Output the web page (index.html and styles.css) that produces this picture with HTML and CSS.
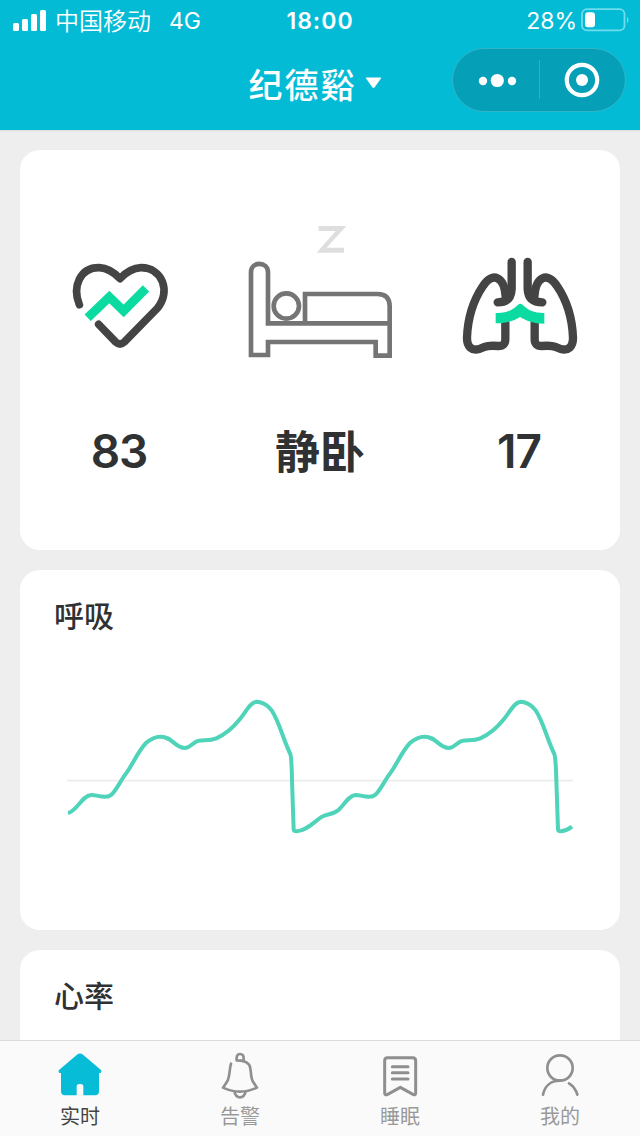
FILE: index.html
```html
<!DOCTYPE html>
<html lang="zh-CN">
<head>
    <meta charset="UTF-8">
    <meta name="viewport" content="width=device-width, initial-scale=1.0">
    <title>实时</title>
    <link rel="stylesheet" href="styles.css">
</head>
<body>
    <header class="header">
        <!-- 状态栏 -->
        <div class="status">
            <div class="status-left">
                <svg class="signal" viewBox="0 0 33 21" fill="#fff">
                    <rect x="0" y="13" width="6" height="8" rx="1.5"/>
                    <rect x="9" y="9" width="6" height="12" rx="1.5"/>
                    <rect x="18" y="4" width="6" height="17" rx="1.5"/>
                    <rect x="27" y="0" width="6" height="21" rx="1.5"/>
                </svg>
                <span class="carrier">中国移动</span>
                <span class="network">4G</span>
            </div>
            <div class="time">18:00</div>
            <div class="status-right">
                <span class="percent">28%</span>
                <svg class="battery" viewBox="0 0 48 24">
                    <rect x="1" y="1.2" width="42.5" height="21.2" rx="5" fill="none" stroke="#6fdcec" stroke-width="1.8"/>
                    <rect x="4" y="4.2" width="10" height="15" rx="3" fill="#fff"/>
                    <path d="M46 8.5 Q49 12 46 15.5 Z" fill="#6fdcec"/>
                </svg>
            </div>
        </div>
        <!-- 标题栏 -->
        <div class="nav">
            <div class="user">
                <span class="user-name">纪德谿</span>
                <svg class="arrow" viewBox="0 0 16 12"><path d="M1 .5H15Q16 .5 15.4 1.5L9.2 10.3Q8 11.8 6.8 10.3L.6 1.5Q0 .5 1 .5Z" fill="#fff"/></svg>
            </div>
            <div class="capsule">
                <svg viewBox="0 0 172 62">
                    <g fill="#fff">
                        <circle cx="30" cy="32" r="4.2"/>
                        <circle cx="44.3" cy="31.5" r="6.6"/>
                        <circle cx="59" cy="32" r="4.2"/>
                        <circle cx="129" cy="31" r="6"/>
                    </g>
                    <path d="M86.5 11V50" stroke="#31afc4" stroke-width="1"/>
                    <circle cx="129" cy="31" r="15.2" fill="none" stroke="#fff" stroke-width="4.2"/>
                </svg>
            </div>
        </div>
    </header>

    <main class="content">
        <!-- 当前状态 -->
        <section class="card summary">
            <div class="item">
                <div class="item-icon">
                    <svg class="heart" viewBox="0 0 360 330" fill="none">
                        <path d="M58 164C36 110 60 52 118 53C143 54 162 67 180 86C198 67 217 54 243 53C306 52 335 125 291 176L193 276Q180 288 167 276L116 223" stroke="#444" stroke-width="23" stroke-linecap="round" stroke-linejoin="round"/>
                        <path d="M83 203L148 141L191 183L258 115" stroke="#0bdba0" stroke-width="27"/>
                    </svg>
                </div>
                <span class="value number">83</span>
            </div>
            <div class="item">
                <div class="item-icon">
                    <svg class="bed" viewBox="0 0 480 450" fill="none">
                        <path d="M236 33H319L260 98H312V113H230L287 48H236Z" fill="#dedede"/>
                        <g stroke="#757575" stroke-width="14">
                            <path d="M33 420V172C33 138 84 138 84 172V325H449V422H407V381H84V420Z"/>
                            <path d="M195 325V237H413Q449 237 449 274V325"/>
                            <circle cx="139" cy="273" r="38"/>
                        </g>
                    </svg>
                </div>
                <span class="value">静卧</span>
            </div>
            <div class="item">
                <div class="item-icon">
                    <svg class="lungs" viewBox="0 0 390 330" fill="none">
                        <g stroke="#444" stroke-width="25" stroke-linecap="round" stroke-linejoin="round">
                            <path d="M170 36V117Q168 157 128 157"/>
                            <path d="M152 140C148 79 112 64 84 108C50 158 38 210 36 263C36 291 50 303 73 297C94 288 100 286 131 288Q151 288 151 268V218"/>
                            <path d="M218 36V117Q220 157 262 157"/>
                            <path d="M238 140C242 79 278 64 306 108C340 158 352 210 354 263C354 291 340 303 317 297C296 288 290 286 259 288Q239 288 239 268V218"/>
                        </g>
                        <path d="M122 189C157 190 171 180 186 167Q196 156 206 167C221 180 234 188 268 189V221C235 221 213 212 195 201C177 212 157 220 122 220Z" fill="#0bdba0"/>
                    </svg>
                </div>
                <span class="value number">17</span>
            </div>
        </section>

        <!-- 呼吸曲线 -->
        <section class="card breath">
            <h2>呼吸</h2>
            <svg class="chart" viewBox="0 0 1620 510" fill="none">
                <path d="M52 302H1568" stroke="#ececec" stroke-width="5"/>
                <path d="M54 399C80 394 97 345 125 345C142 345 163 356 180 347C195 340 207 308 232 275C250 249 266 211 288 189C300 179 313 170 330 170C365 168 375 204 404 204C422 204 430 184 446 182C465 179 478 184 499 175C528 162 550 142 570 117C588 95 601 66 620 65C638 66 654 76 665 91C688 125 700 180 721 222C725 235 725 260 726 300L731 448Q731 454 740 454C768 453 790 427 816 410C834 401 848 404 863 392C880 378 896 346 917 345C934 345 955 356 972 347C987 340 999 308 1024 275C1042 249 1058 211 1080 189C1092 179 1105 170 1122 170C1157 168 1167 204 1196 204C1214 204 1222 184 1238 182C1257 179 1270 184 1291 175C1320 162 1342 142 1362 117C1380 95 1393 66 1412 65C1430 66 1446 76 1457 91C1480 125 1492 180 1513 222C1517 235 1518 260 1519 300L1524 448Q1524 454 1533 454Q1550 452 1566 440" stroke="#4fd3b9" stroke-width="12" stroke-linejoin="round"/>
            </svg>
        </section>

        <!-- 心率曲线 -->
        <section class="card heart-rate">
            <h2>心率</h2>
        </section>
    </main>

    <!-- 底部导航 -->
    <nav class="tabbar">
        <a class="tab active">
            <svg viewBox="0 0 150 150">
                <path d="M66 14Q75 7 84 14L138 60Q142 68 135 69H132V124Q132 136 120 136H85V108Q85 102 75 102Q65 102 65 108V136H30Q18 136 18 124V69H15Q8 68 12 60Z" fill="#07bcd6"/>
            </svg>
            <span>实时</span>
        </a>
        <a class="tab">
            <svg viewBox="0 0 150 150" fill="none" stroke="#8f8f8f" stroke-width="8" stroke-linecap="round" stroke-linejoin="round">
                <path d="M48 41C43 54 45 83 36 95L24 113Q49 125 75 125Q101 125 126 113L114 95C105 81 110 54 102 44Q93 31 65 31Q63 12 75 12Q87 12 86 28"/>
                <path d="M59 128Q63 142 75 142Q87 142 91 128"/>
            </svg>
            <span>告警</span>
        </a>
        <a class="tab">
            <svg viewBox="0 0 150 150" fill="none" stroke="#8f8f8f" stroke-width="9" stroke-linecap="round" stroke-linejoin="round">
                <path d="M37 23H113Q122 23 122 32V129Q122 137 114 133L76 112L38 133Q29 137 29 129V32Q29 23 37 23Z"/>
                <path d="M52 50H99M52 68H99M52 87H99"/>
            </svg>
            <span>睡眠</span>
        </a>
        <a class="tab">
            <svg viewBox="0 0 150 150" fill="none" stroke="#8f8f8f" stroke-width="8" stroke-linecap="round">
                <circle cx="75" cy="54" r="38"/>
                <path d="M24 134C29 108 48 92 75 92M102 100Q121 112 127 134"/>
            </svg>
            <span>我的</span>
        </a>
    </nav>
</body>
</html>
```
FILE: styles.css
```css
* {
    box-sizing: border-box;
}

body {
    display: flex;
    flex-direction: column;
    height: 1136px;
    margin: 0;
    overflow: hidden;
    background-color: #eeeeee;
    color: #303133;
    font-family: Inter, "Noto Sans CJK SC", sans-serif;
}

svg {
    display: block;
}

.header {
    flex: none;
    height: 130px;
    background-color: #04bbd6;
    color: white;
    box-shadow: 0 1px 2px #dddddd;
}

.status {
    display: grid;
    grid-template-columns: 1fr auto 1fr;
    align-items: center;
    height: 40px;
    padding: 0 11px 0 13px;
    font-size: 24px;
    line-height: 36px;
}

.status-left,
.status-right {
    display: flex;
    align-items: center;
}

.status-right {
    justify-content: flex-end;
}

.signal {
    width: 33px;
    height: 21px;
    margin-right: 9px;
}

.carrier {
    padding-top: 3px;
    margin-right: 18px;
    font-weight: 350;
}

.network {
    padding-top: 2px;
    font-size: 23px;
}

.time {
    padding: 2px 2px 0 0;
    font-weight: 600;
    font-size: 23px;
    letter-spacing: 1px;
}

.percent {
    padding-top: 2px;
    margin-right: 4px;
    font-size: 23px;
}

.battery {
    width: 48px;
    height: 24px;
}

.nav {
    display: grid;
    grid-template-columns: 1fr auto 1fr;
    padding: 8px 14px 0;
}

.user {
    display: flex;
    grid-column: 2;
    align-items: center;
    height: 70px;
    padding-right: 10px;
}

.user-name {
    font-size: 34px;
    font-weight: 500;
    letter-spacing: 2px;
}

.arrow {
    width: 17px;
    height: 12px;
    margin-left: 8px;
}

.capsule {
    justify-self: end;
    width: 174px;
    height: 64px;
    border: 1px solid #31b5c9;
    border-radius: 32px;
    background-color: #05a0b7;
}

.content {
    flex: 1;
    min-height: 0;
    padding: 20px 20px 0;
    overflow: hidden;
}

.card {
    margin-bottom: 20px;
    border-radius: 20px;
    background-color: white;
}

.card h2 {
    margin: 0;
    padding: 24px 34px 0;
    font-size: 30px;
    font-weight: 500;
    line-height: 44px;
}

.summary {
    display: grid;
    grid-template-columns: repeat(3, 1fr);
    height: 400px;
    padding-top: 65px;
}

.item {
    display: flex;
    flex-direction: column;
    align-items: center;
}

.item-icon {
    display: flex;
    align-items: flex-end;
    height: 150px;
}

.heart {
    width: 120px;
    height: 110px;
    margin-bottom: 5px;
}

.bed {
    width: 160px;
    height: 150px;
}

.lungs {
    width: 130px;
    height: 110px;
    margin-bottom: 5px;
}

.value {
    margin-top: 53px;
    font-size: 45px;
    font-weight: 600;
    line-height: 70px;
}

.value.number {
    margin-top: 51px;
    padding-right: 2px;
    font-size: 46px;
    letter-spacing: -1px;
}

.breath {
    height: 360px;
}

.chart {
    width: 540px;
    height: 170px;
    margin: 42px 0 0 30px;
}

.heart-rate {
    height: 360px;
}

.tabbar {
    display: grid;
    flex: none;
    grid-template-columns: repeat(4, 1fr);
    height: 96px;
    border-top: 1px solid #dcdcdc;
    background-color: #fafafa;
}

.tab {
    display: flex;
    flex-direction: column;
    align-items: center;
    padding-top: 9px;
    color: #999999;
    font-size: 20px;
    line-height: 34px;
}

.tab svg {
    width: 50px;
    height: 50px;
}

.tab.active {
    color: #444444;
}
```
